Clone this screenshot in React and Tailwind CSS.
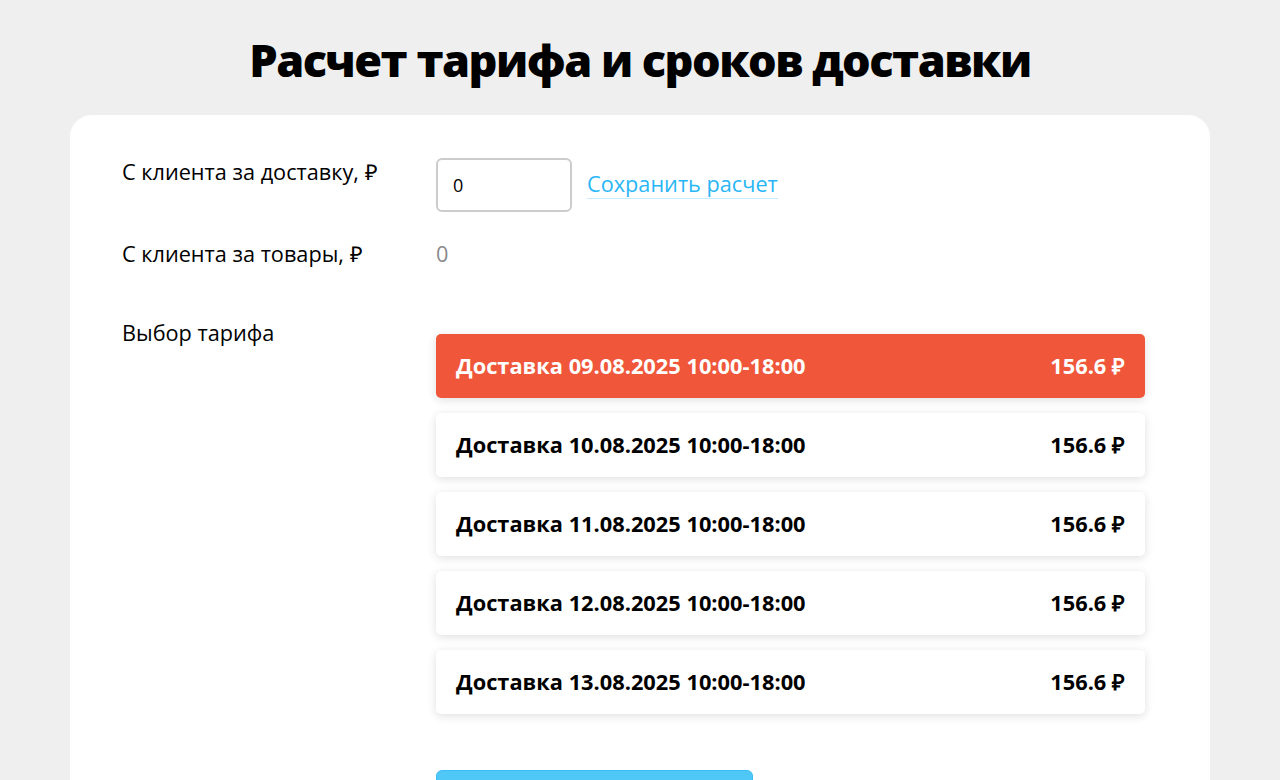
const tariffs = [
  "09.08.2025",
  "10.08.2025",
  "11.08.2025",
  "12.08.2025",
  "13.08.2025",
];

export default function App() {
  return (
    <div className="min-h-screen bg-[#efefef] font-['Open_Sans',sans-serif] text-black">
      <h1 className="pt-[30px] pb-[25px] text-center text-[45px] font-extrabold leading-[60px] tracking-[-1.5px]">
        Расчет тарифа и сроков доставки
      </h1>

      <div className="mx-[70px] rounded-[22px] bg-white pl-[52px] pr-[65px] pt-[43px] pb-[60px]">
        {/* доставка */}
        <div className="flex items-start">
          <div className="w-[314px] shrink-0 text-[21.7px] leading-[28px]">С клиента за доставку, ₽</div>
          <input
            defaultValue="0"
            className="h-[54px] w-[136px] rounded-[6px] border-2 border-[#cccccc] px-[15px] text-[18px] outline-none"
          />
          <a className="ml-[15px] mt-[12px] border-b border-[#c9ecfc] text-[21.7px] leading-[28px] text-[#29b6f6]">
            Сохранить расчет
          </a>
        </div>

        {/* товары */}
        <div className="mt-[28px] flex items-start">
          <div className="w-[314px] shrink-0 text-[21.7px] leading-[28px]">С клиента за товары, ₽</div>
          <div className="text-[21.7px] leading-[28px] text-[#8a8a8a]">0</div>
        </div>

        {/* тариф */}
        <div className="mt-[51px] flex items-start">
          <div className="w-[314px] shrink-0 text-[21.7px] leading-[28px]">Выбор тарифа</div>
          <div className="mt-[15px] flex flex-1 flex-col gap-[15px]">
            {tariffs.map((d, i) => (
              <div
                key={d}
                className={`flex h-[64px] items-center justify-between rounded-[5px] px-[20px] text-[21.8px] font-bold shadow-[0_2px_10px_rgba(0,0,0,0.13)] ${
                  i === 0 ? "bg-[#f0563a] text-white" : "bg-white text-black"
                }`}
              >
                <span>Доставка {d} 10:00-18:00</span>
                <span>156.6 ₽</span>
              </div>
            ))}
            <button className="mt-[41px] h-[54px] w-[317px] rounded-[6px] border border-[#3bbcf2] bg-[#4fc8f7]" />
          </div>
        </div>
      </div>
    </div>
  );
}
